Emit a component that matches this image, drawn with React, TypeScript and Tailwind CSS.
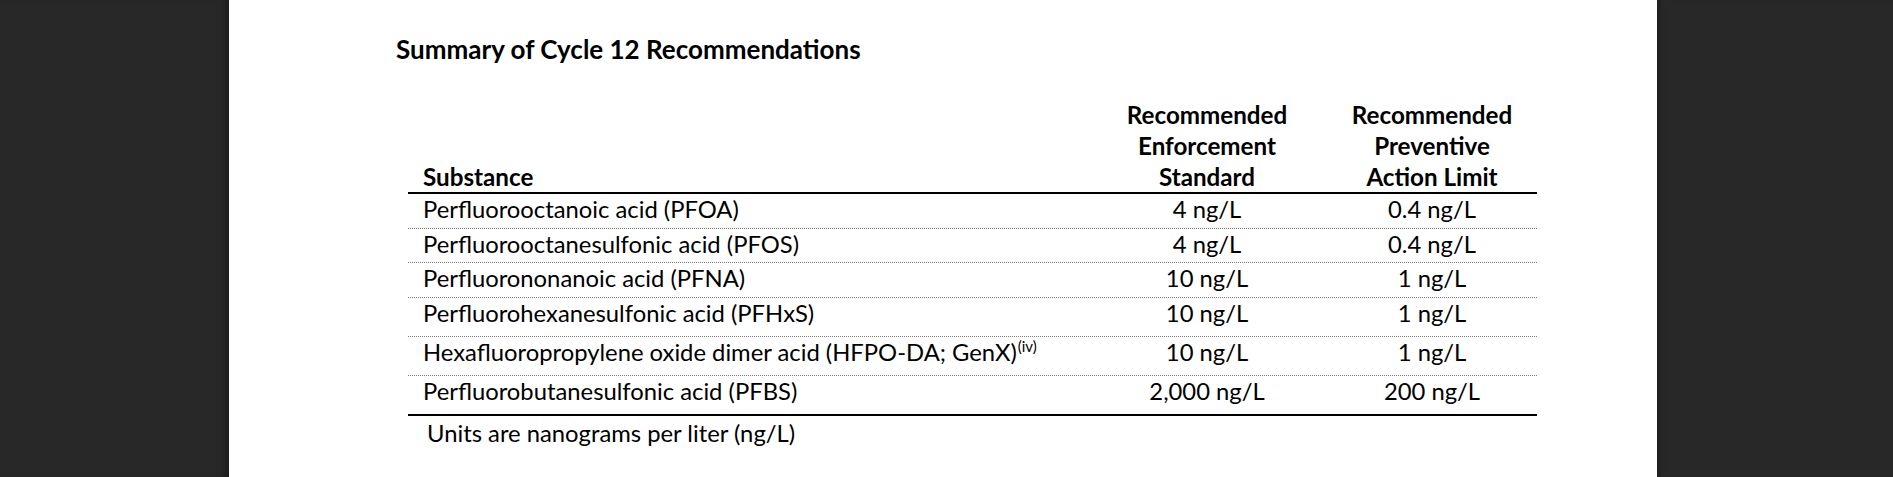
import React from 'react';

interface Row {
  substance: React.ReactNode;
  standard: string;
  limit: string;
  height: string;
  last?: boolean;
}

const rows: Row[] = [
  { substance: 'Perfluorooctanoic acid (PFOA)', standard: '4 ng/L', limit: '0.4 ng/L', height: 'h-[35px]' },
  { substance: 'Perfluorooctanesulfonic acid (PFOS)', standard: '4 ng/L', limit: '0.4 ng/L', height: 'h-[34px]' },
  { substance: 'Perfluorononanoic acid (PFNA)', standard: '10 ng/L', limit: '1 ng/L', height: 'h-[35px]' },
  { substance: 'Perfluorohexanesulfonic acid (PFHxS)', standard: '10 ng/L', limit: '1 ng/L', height: 'h-[39px]' },
  {
    substance: (
      <>
        Hexafluoropropylene oxide dimer acid (HFPO-DA; GenX)
        <sup className="relative -top-[9px] ml-[1px] text-[15px]">(iv)</sup>
      </>
    ),
    standard: '10 ng/L',
    limit: '1 ng/L',
    height: 'h-[39px]',
  },
  { substance: 'Perfluorobutanesulfonic acid (PFBS)', standard: '2,000 ng/L', limit: '200 ng/L', height: 'h-[40px]', last: true },
];

const TableRow: React.FC<{ row: Row }> = ({ row }) => (
  <div
    className={`grid grid-cols-[679px_240px_210px] pt-[1px] leading-[28px] ${row.height} ${
      row.last ? 'border-b-2 border-solid border-black' : 'border-b border-dotted border-[#7a7a7a]'
    }`}
  >
    <div className="pl-[15px] whitespace-nowrap">{row.substance}</div>
    <div className="text-center">{row.standard}</div>
    <div className="text-center">{row.limit}</div>
  </div>
);

export default function App() {
  return (
    <div className="flex h-[477px] w-full overflow-hidden bg-[#282828] font-['Lato',sans-serif] text-black">
      <div className="w-[229px] shrink-0 bg-[#282828] shadow-[inset_-9px_0_8px_-6px_rgba(0,0,0,0.35)]" />

      <div className="w-[1428px] shrink-0 bg-white">
        <h1 className="mt-[34px] pl-[167px] text-[26px] font-bold leading-[31px]">
          Summary of Cycle 12 Recommendations
        </h1>

        <div className="ml-[179px] mt-[34px] w-[1129px]">
          <div className="grid grid-cols-[679px_240px_210px] items-end border-b-2 border-black text-[24.2px] font-bold leading-[31px]">
            <div className="pl-[15px]">Substance</div>
            <div className="text-center">
              Recommended
              <br />
              Enforcement
              <br />
              Standard
            </div>
            <div className="text-center">
              Recommended
              <br />
              Preventive
              <br />
              Action Limit
            </div>
          </div>

          <div className="text-[23.8px]">
            {rows.map((row, i) => (
              <TableRow key={i} row={row} />
            ))}
          </div>

          <p className="mt-[3px] pl-[19px] text-[23.8px] leading-[28px]">Units are nanograms per liter (ng/L)</p>
        </div>
      </div>

      <div className="flex-1 bg-[#282828] shadow-[inset_7px_0_6px_-5px_rgba(0,0,0,0.3)]" />
    </div>
  );
}
